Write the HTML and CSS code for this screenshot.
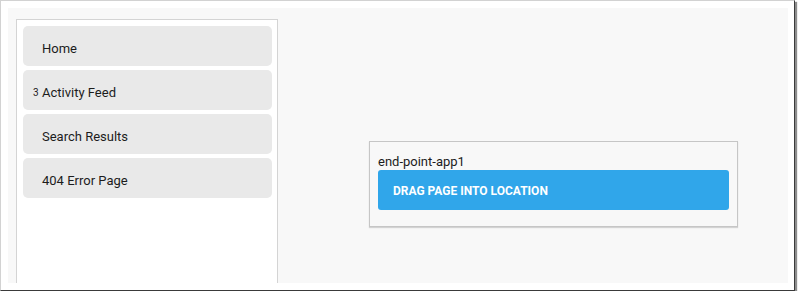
FILE: index.html
```html
<!DOCTYPE html>
<html lang="en">
<head>
    <meta charset="UTF-8">
    <meta name="viewport" content="width=device-width, initial-scale=1.0">
    <title>Page Locations</title>
    <link rel="stylesheet" href="styles.css">
</head>
<body>

    <div class="frame">
        <div class="screen">
            <div class="sidebar">
                <div class="page-item">Home</div>
                <div class="page-item"><span class="badge">3</span>Activity Feed</div>
                <div class="page-item">Search Results</div>
                <div class="page-item">404 Error Page</div>
            </div>

            <div class="main">
                <div class="endpoint">
                    <div class="endpoint-name">end-point-app1</div>
                    <div class="drop-zone">DRAG PAGE INTO LOCATION</div>
                </div>
            </div>
        </div>
    </div>

</body>
</html>
```

FILE: styles.css
```css
body {
    margin: 0;
    background: white;
    font-family: Roboto, "Liberation Sans", Arial, sans-serif;
    color: #1c1c1c;
}

.frame {
    width: 795px;
    height: 291px;
    box-sizing: border-box;
    padding: 7px 6px 7px 7px;
    background: white;
    border-top: 1px solid #d2d2d2;
    border-left: 1px solid #d2d2d2;
    border-right: 1px solid #3a3a3a;
    border-bottom: 1px solid #3a3a3a;
    box-shadow: 2px 2px 1px rgba(0, 0, 0, 0.45);
}

.screen {
    display: flex;
    height: 100%;
    background: #f8f8f8;
}

.sidebar {
    width: 262px;
    box-sizing: border-box;
    margin: 11px 0 0 8px;
    padding: 6px 5px 0 6px;
    background: white;
    border: 1px solid #d4d4d4;
    border-bottom: none;
    display: flex;
    flex-direction: column;
    gap: 4px;
}

.page-item {
    position: relative;
    height: 40px;
    box-sizing: border-box;
    padding: 15px 19px 0;
    font-size: 13px;
    line-height: 16px;
    background: #e9e9e9;
    border-radius: 5px;
}

.badge {
    position: absolute;
    left: 10px;
    top: 17px;
    font-size: 10px;
    line-height: 12px;
}

.main {
    flex: 1;
    padding: 133px 0 0 91px;
}

.endpoint {
    width: 369px;
    box-sizing: border-box;
    padding: 12px 8px 16px;
    border: 1px solid #c6c6c6;
    box-shadow: 0 1px 1px rgba(0, 0, 0, 0.15);
    background: #f8f8f8;
}

.endpoint-name {
    font-size: 13px;
    line-height: 15px;
    margin-bottom: 1px;
}

.drop-zone {
    height: 40px;
    box-sizing: border-box;
    padding: 14px 15px 0;
    background: #30a6ea;
    border-radius: 3px;
    color: white;
    font-size: 12px;
    font-weight: bold;
    line-height: 14px;
}
```
